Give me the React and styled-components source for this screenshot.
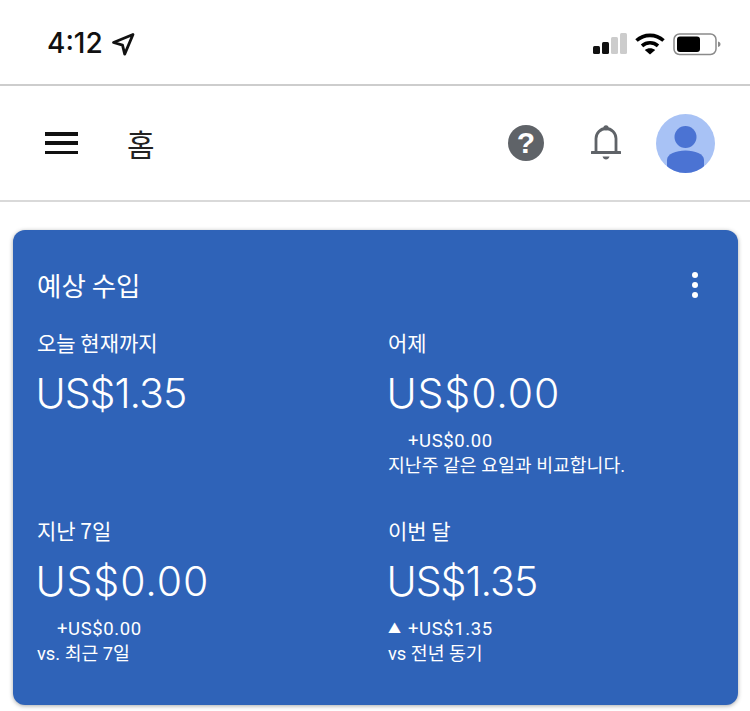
import React from "react";
import styled, { createGlobalStyle } from "styled-components";

const GlobalStyle = createGlobalStyle`
  html, body {
    margin: 0;
    padding: 0;
    background: #fff;
  }
  body {
    font-family: Roboto, "Noto Sans CJK KR", sans-serif;
  }
`;

const Page = styled.div`
  width: 750px;
  height: 711px;
  overflow: hidden;
  display: flex;
  flex-direction: column;
`;

const StatusBar = styled.div`
  height: 86px;
  box-sizing: border-box;
  padding: 26px 29px 0 47px;
  display: flex;
  justify-content: space-between;
  border-bottom: 2px solid #cdcdcd;
`;

const Clock = styled.div`
  display: flex;
  align-items: flex-start;
  gap: 8px;
  font-family: Inter, sans-serif;
  font-size: 28px;
  font-weight: 500;
  line-height: 34px;
  color: #111;
`;

const StatusIcons = styled.div`
  display: flex;
  align-items: flex-start;
  gap: 8px;
  padding-top: 7px;
`;

const TopBar = styled.header`
  height: 116px;
  box-sizing: border-box;
  padding: 0 35px 0 45px;
  display: flex;
  align-items: center;
  border-bottom: 2px solid #d9d9d9;
`;

const MenuLines = styled.div`
  width: 33px;
  height: 22px;
  display: flex;
  flex-direction: column;
  justify-content: space-between;
  margin-right: 49px;

  span {
    height: 3.5px;
    background: #111;
  }
`;

const PageTitle = styled.div`
  flex: 1;
  font-family: "Noto Sans CJK KR", sans-serif;
  font-size: 30px;
  line-height: 36px;
  color: #222;
`;

const Actions = styled.div`
  display: flex;
  align-items: center;
`;

const HelpBadge = styled.div`
  width: 36px;
  height: 36px;
  border-radius: 50%;
  background: #5f6368;
  color: #fff;
  display: flex;
  align-items: center;
  justify-content: center;
  font-family: "Liberation Sans", sans-serif;
  font-size: 30px;
  font-weight: 700;
  margin-right: 47px;
`;

const BellIcon = styled.svg`
  width: 30px;
  height: 36px;
  display: block;
  margin-right: 35px;
`;

const Avatar = styled.svg`
  width: 59px;
  height: 59px;
  display: block;
`;

const Card = styled.section`
  margin: 28px 12px 0 13px;
  height: 475px;
  box-sizing: border-box;
  padding: 36px 24px 0;
  background: #2f63b8;
  border-radius: 12px;
  box-shadow: 0 1px 4px rgba(60, 64, 67, 0.45);
  color: #fff;
`;

const CardHead = styled.div`
  display: flex;
  justify-content: space-between;
  align-items: center;
  height: 38px;
`;

const CardTitle = styled.h2`
  margin: 0;
  font-family: "Noto Sans CJK KR", sans-serif;
  font-size: 26.500px;
  font-weight: 400;
  line-height: 38px;
`;

const Kebab = styled.div`
  display: flex;
  flex-direction: column;
  gap: 4px;
  margin-right: 16px;

  span {
    width: 6px;
    height: 6px;
    border-radius: 50%;
    background: #fff;
  }
`;

const Stats = styled.div`
  display: grid;
  grid-template-columns: 351px 1fr;
  grid-auto-rows: 188px;
  margin-top: 22px;
`;

const Stat = styled.div`
  display: flex;
  flex-direction: column;
`;

const Label = styled.div`
  font-family: "Noto Sans CJK KR", sans-serif;
  font-size: 21px;
  line-height: 32px;
`;

const Amount = styled.div`
  font-family: Inter, sans-serif;
  font-size: 41px;
  font-weight: 350;
  letter-spacing: ${(props) => props.$tracking}px;
  line-height: 50px;
  margin-top: 10px;
  margin-left: -1.5px;
`;

const Delta = styled.div`
  display: flex;
  font-size: 18.500px;
  line-height: 24px;
  letter-spacing: 0.6px;
  margin-top: 11px;
`;

const Arrow = styled.span`
  width: 20px;
  font-size: 13px;
  line-height: 24px;
`;

const Compare = styled.div`
  font-size: 18.300px;
  line-height: 26px;
`;

const stats = [
  { label: "오늘 현재까지", amount: "US$1.35", tracking: -1 },
  { label: "어제", amount: "US$0.00", tracking: 0.9, delta: "+US$0.00", compare: "지난주 같은 요일과 비교합니다." },
  { label: "지난 7일", amount: "US$0.00", tracking: 0.9, delta: "+US$0.00", compare: "vs. 최근 7일" },
  { label: "이번 달", amount: "US$1.35", tracking: -1, arrow: "▲", delta: "+US$1.35", compare: "vs 전년 동기" },
];

function App() {
  return (
    <Page>
      <GlobalStyle />
      <StatusBar>
        <Clock>
          4:12
          <svg width="24" height="24" viewBox="0 0 24 24" style={{ marginTop: 6 }}>
            <path d="M22 2.500 2.500 10.500l9 2.600 2.200 9z" fill="none" stroke="#111" strokeWidth="2.800" strokeLinejoin="round" />
          </svg>
        </Clock>
        <StatusIcons>
          <svg width="34" height="21" viewBox="0 0 34 21">
            <rect x="0" y="13" width="7" height="8" rx="1.500" fill="#111" />
            <rect x="9" y="9" width="7" height="12" rx="1.500" fill="#111" />
            <rect x="18" y="4" width="7" height="17" rx="1.500" fill="#ccc" />
            <rect x="27" y="0" width="7" height="21" rx="1.500" fill="#ccc" />
          </svg>
          <svg width="30" height="22" viewBox="0 0 30 22">
            <path d="M1.500 7.500C9 .6 21 .6 28.500 7.500" fill="none" stroke="#000" strokeWidth="3.600" />
            <path d="M7 12.800c4.600-4 11.400-4 16 0" fill="none" stroke="#000" strokeWidth="3.600" />
            <path d="M9.800 17c3-2.400 7.400-2.400 10.400 0L15 21.500z" fill="#000" />
          </svg>
          <svg width="48" height="23" viewBox="0 0 48 23">
            <rect x="1" y="1" width="42" height="20.500" rx="5.500" fill="none" stroke="#8a8a8a" strokeWidth="1.500" />
            <rect x="4" y="3.500" width="23" height="15.500" rx="3" fill="#000" />
            <path d="M45 8.500c1.800.5 2.500 1.500 2.500 2.700s-.7 2.300-2.500 2.800z" fill="#8a8a8a" />
          </svg>
        </StatusIcons>
      </StatusBar>
      <TopBar>
        <MenuLines>
          <span />
          <span />
          <span />
        </MenuLines>
        <PageTitle>홈</PageTitle>
        <Actions>
          <HelpBadge>?</HelpBadge>
          <BellIcon viewBox="0 0 30 36">
            <path d="M5 27V13.500a10 10 0 0 1 20 0V27" fill="none" stroke="#5f6368" strokeWidth="2.800" />
            <circle cx="15" cy="2.800" r="2.600" fill="#5f6368" />
            <rect x="0" y="26" width="30" height="3" rx="0.500" fill="#5f6368" />
            <path d="M11.500 31.500h7c-.5 2-2 3-3.500 3s-3-1-3.500-3z" fill="#5f6368" />
          </BellIcon>
          <Avatar viewBox="0 0 59 59">
            <defs>
              <clipPath id="avatar-clip">
                <circle cx="29.500" cy="29.500" r="29.500" />
              </clipPath>
            </defs>
            <circle cx="29.500" cy="29.500" r="29.500" fill="#a8c2f5" />
            <g clipPath="url(#avatar-clip)" fill="#4b73d3">
              <circle cx="29.500" cy="23" r="11" />
              <path d="M11 46c0-6 9-9.500 18.500-9.500S48 40 48 46v13H11z" />
            </g>
          </Avatar>
        </Actions>
      </TopBar>
      <Card>
        <CardHead>
          <CardTitle>예상 수입</CardTitle>
          <Kebab>
            <span />
            <span />
            <span />
          </Kebab>
        </CardHead>
        <Stats>
          {stats.map((stat) => (
            <Stat key={stat.label}>
              <Label>{stat.label}</Label>
              <Amount $tracking={stat.tracking}>{stat.amount}</Amount>
              {stat.delta && (
                <>
                  <Delta>
                    <Arrow>{stat.arrow}</Arrow>
                    {stat.delta}
                  </Delta>
                  <Compare>{stat.compare}</Compare>
                </>
              )}
            </Stat>
          ))}
        </Stats>
      </Card>
    </Page>
  );
}

export default App;
